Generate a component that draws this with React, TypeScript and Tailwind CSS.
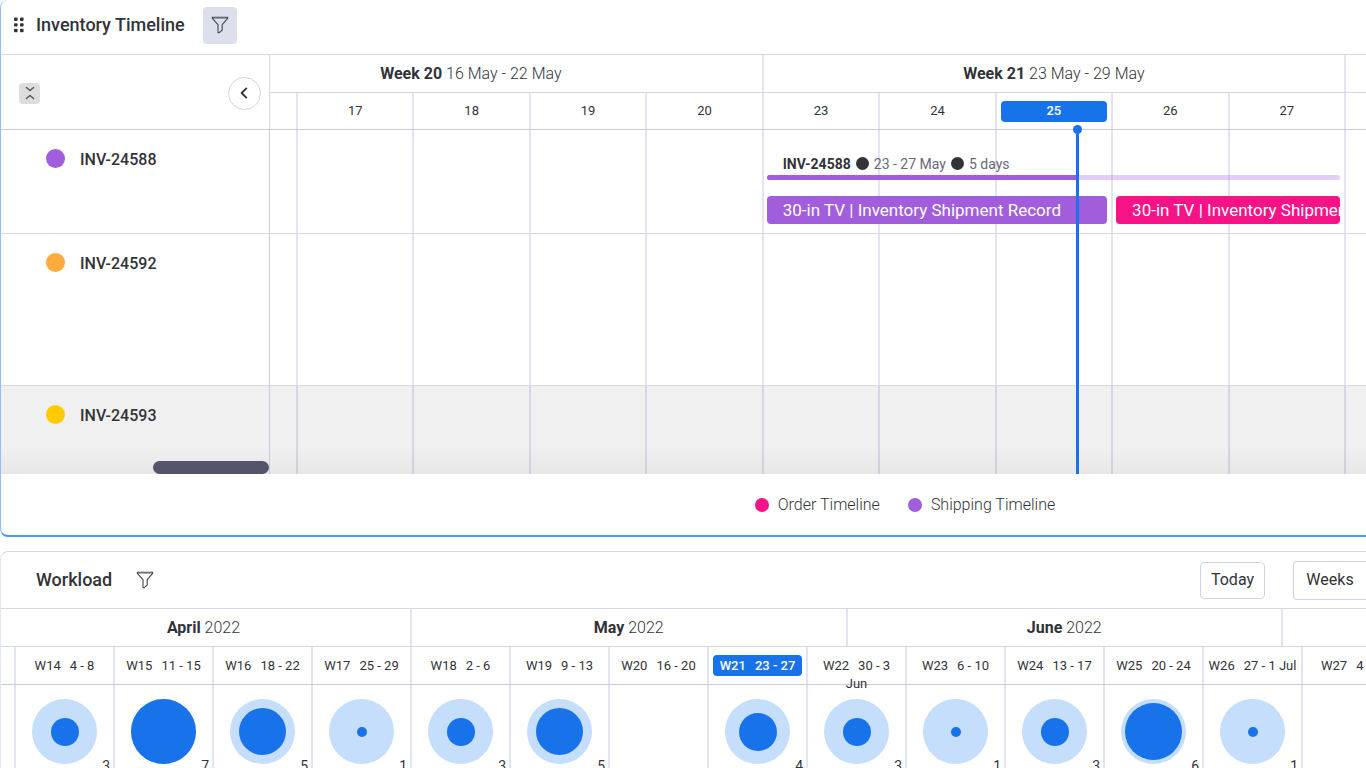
import type { ReactNode } from "react";

type Day = { label: string; today?: boolean };

const days: Day[] = [
  { label: "17" },
  { label: "18" },
  { label: "19" },
  { label: "20" },
  { label: "23" },
  { label: "24" },
  { label: "25", today: true },
  { label: "26" },
  { label: "27" },
];

type Week = { name: string; range: string; wrap?: string; count?: number; current?: boolean };

const weeks: Week[] = [
  { name: "W14", range: "4 - 8", count: 3 },
  { name: "W15", range: "11 - 15", count: 7 },
  { name: "W16", range: "18 - 22", count: 5 },
  { name: "W17", range: "25 - 29", count: 1 },
  { name: "W18", range: "2 - 6", count: 3 },
  { name: "W19", range: "9 - 13", count: 5 },
  { name: "W20", range: "16 - 20" },
  { name: "W21", range: "23 - 27", count: 4, current: true },
  { name: "W22", range: "30 - 3", wrap: "Jun", count: 3 },
  { name: "W23", range: "6 - 10", count: 1 },
  { name: "W24", range: "13 - 17", count: 3 },
  { name: "W25", range: "20 - 24", count: 6 },
  { name: "W26", range: "27 - 1 Jul", count: 1 },
];

const bubbleSize: Record<number, string> = {
  1: "size-[10px]",
  3: "size-[28px]",
  4: "size-[38px]",
  5: "size-[47px]",
  6: "size-[57px]",
  7: "size-[65px]",
};

const dayGrid = "grid grid-cols-[26px_repeat(9,minmax(0,1fr))_22px]";
const weekGrid = "grid grid-cols-[13px_repeat(13,minmax(0,1fr))_65px]";
const vLine = "border-l-2 border-[#3b42a0]/14";

function FilterIcon() {
  return (
    <svg viewBox="0 0 18 18" className="size-[18px]" fill="none" stroke="#45464d" strokeLinejoin="round" aria-hidden="true">
      <path d="M1.3 1.2h15.4v1.1l-5.5 6.3v5.4l-2.9 2.6H7V8.6L1.3 2.3z" strokeWidth="1.1" />
      <path d="M2 2.4h14" strokeWidth="0.5" />
    </svg>
  );
}

function DragHandle() {
  return (
    <svg viewBox="0 0 12 16" className="h-4 w-3" fill="#323338" aria-hidden="true">
      {[0.6, 6.2, 11.8].map((y) => (
        <g key={y}>
          <rect x="1" y={y} width="3.6" height="3.4" rx="1" />
          <rect x="7" y={y} width="3.6" height="3.4" rx="1" />
        </g>
      ))}
    </svg>
  );
}

function DayCells() {
  return (
    <div className={`${dayGrid} h-full`}>
      <div />
      {days.map((d) => (
        <div key={d.label} className={vLine} />
      ))}
      <div className={vLine} />
    </div>
  );
}

function TimelineRow({
  name,
  dot,
  size,
  children,
}: {
  name: string;
  dot: string;
  size: string;
  children?: ReactNode;
}) {
  return (
    <div className={`flex ${size}`}>
      <div className="w-[269px] shrink-0 border-r border-[#c9cce0] pt-[19px] pl-[45px]">
        <div className="flex h-6 items-start gap-[15px]">
          <span className={`size-[19px] rounded-full ${dot}`} />
          <span className="text-base leading-[22px] font-medium text-[#323338]">{name}</span>
        </div>
      </div>
      <div className="relative min-w-0 flex-1">
        <DayCells />
        {children}
      </div>
    </div>
  );
}

function Dot() {
  return <span className="size-[13px] rounded-full bg-[#323338]" />;
}

function InventoryTimeline() {
  return (
    <section className="rounded-l-lg border-b-2 border-l border-b-[#4c97fa] border-l-[#8fbefb] bg-white">
      <header className="flex h-[55px] items-center border-b border-[#d5d8e9] pb-1 pl-3">
        <DragHandle />
        <h2 className="ml-[11px] text-lg font-medium text-[#323338]">Inventory Timeline</h2>
        <button type="button" aria-label="Filter timeline" className="ml-[18px] flex h-[37px] w-[34px] items-center justify-center rounded bg-[#dcdfec]">
          <FilterIcon />
        </button>
      </header>

      <div className="relative">
        <div className="flex border-b border-[#c9cce0]">
          <div className="flex w-[269px] shrink-0 items-center justify-between border-r border-[#d5d8e9] pt-0.5 pr-2 pl-[18px]">
            <button type="button" aria-label="Collapse rows" className="flex size-[21px] items-center justify-center rounded bg-[#dddddd]">
              <svg viewBox="0 0 14 16" className="h-4 w-[14px]" fill="none" stroke="#55565c" strokeWidth="1.4" strokeLinecap="round" strokeLinejoin="round" aria-hidden="true">
                <path d="M3.4 2.4 7 5.6l3.6-3.2M3.4 13.6 7 10.4l3.6 3.2" />
              </svg>
            </button>
            <button type="button" aria-label="Collapse panel" className="flex size-[33px] items-center justify-center rounded-full border border-[#cfd3ea] bg-white">
              <svg viewBox="0 0 16 16" className="size-4" fill="none" stroke="#323338" strokeWidth="1.8" strokeLinecap="round" strokeLinejoin="round" aria-hidden="true">
                <path d="M9.3 3.4 4.6 8l4.7 4.6" />
              </svg>
            </button>
          </div>
          <div className="min-w-0 flex-1">
            <div className={`${dayGrid} h-[38px] border-b border-[#d5d8e9] text-base font-light text-[#323338]`}>
              <div className="col-span-5 flex items-center justify-center pr-[90px]">
                <span>
                  <b className="font-bold">Week 20</b> 16 May - 22 May
                </span>
              </div>
              <div className={`col-span-5 flex items-center justify-center ${vLine}`}>
                <span>
                  <b className="font-bold">Week 21</b> 23 May - 29 May
                </span>
              </div>
              <div className={vLine} />
            </div>
            <div className={`${dayGrid} h-9`}>
              <div />
              {days.map((d) => (
                <div key={d.label} className={`flex items-center justify-center ${vLine} px-1`}>
                  {d.today ? (
                    <span className="flex h-[21px] w-full items-center justify-center rounded bg-[#1873eb] text-[13px] font-medium text-white">
                      {d.label}
                    </span>
                  ) : (
                    <span className="text-[13px] text-[#323338]">{d.label}</span>
                  )}
                </div>
              ))}
              <div className={vLine} />
            </div>
          </div>
        </div>

        <TimelineRow name="INV-24588" dot="bg-[#a25ddc]" size="h-[104px] border-b border-[#d5d8e9]">
          <div className={`${dayGrid} absolute inset-0 content-start gap-y-[5px] pt-[25px]`}>
            <p className="col-span-4 col-start-6 row-start-1 flex h-[15px] items-center gap-[5px] pt-0.5 pl-[21px] text-sm text-[#676879]">
              <b className="font-bold text-[#323338]">INV-24588</b>
              <Dot />
              <span>23 - 27 May</span>
              <Dot />
              <span>5 days</span>
            </p>
            <div className="col-span-5 col-start-6 row-start-2 mr-1 ml-[5px] h-[5px] overflow-hidden rounded-full bg-[#a25ddc]/30">
              <div className="h-full w-[54%] bg-[#a25ddc]" />
            </div>
            <div className="col-span-3 col-start-6 row-start-3 mt-[11px] mr-1 ml-[5px] h-7 overflow-hidden rounded bg-[#a25ddc] px-4 text-[17px] leading-7 whitespace-nowrap text-white">
              30-in TV | Inventory Shipment Record
            </div>
            <div className="col-span-2 col-start-9 row-start-3 mt-[11px] mr-1 ml-[5px] h-7 overflow-hidden rounded bg-[#f81288] pl-4 text-[17px] leading-7 whitespace-nowrap text-white">
              30-in TV | Inventory Shipment Record
            </div>
          </div>
        </TimelineRow>
        <TimelineRow name="INV-24592" dot="bg-[#fdab3d]" size="h-[152px] border-b border-[#d5d8e9]" />
        <TimelineRow
          name="INV-24593"
          dot="bg-[#ffcb00]"
          size="h-[88px] bg-linear-to-b from-[#f0f0f0] from-70% to-[#e7e7e7]"
        />

        <div className="absolute bottom-0 left-[152px] h-[13px] w-[116px] rounded-full bg-[#54546b]" />

        <div className={`${dayGrid} pointer-events-none absolute top-[70px] right-0 bottom-0 left-[269px]`}>
          <div className="col-start-8 flex w-[142%] flex-col items-center">
            <span className="size-[9px] shrink-0 rounded-full bg-[#1873eb]" />
            <span className="w-[3px] flex-1 bg-[#1873eb]" />
          </div>
        </div>
      </div>

      <footer className="flex h-[61px] items-center justify-center gap-7 pl-[443px] text-base font-light text-[#323338]">
        <span className="flex items-center gap-[9px]">
          <span className="size-[14px] rounded-full bg-[#f81288]" />
          Order Timeline
        </span>
        <span className="flex items-center gap-[9px]">
          <span className="size-[14px] rounded-full bg-[#a25ddc]" />
          Shipping Timeline
        </span>
      </footer>
    </section>
  );
}

function MonthLabel({ month, year }: { month: string; year: string }) {
  return (
    <span>
      <b className="font-bold">{month}</b> {year}
    </span>
  );
}

function Workload() {
  return (
    <section className="mt-[14px] rounded-tl-lg border-t border-l border-t-[#d5d8e9] border-l-[#e4e5f2] bg-white">
      <header className="flex h-[57px] items-center border-b border-[#d5d8e9] pl-[35px]">
        <h2 className="text-lg font-medium text-[#323338]">Workload</h2>
        <button type="button" aria-label="Filter workload" className="ml-6">
          <FilterIcon />
        </button>
        <button type="button" className="ml-auto h-[37px] w-[65px] rounded border border-[#d0d4e8] text-base text-[#323338]">
          Today
        </button>
        <button type="button" className="ml-7 h-[39px] w-[73px] rounded-l border border-r-0 border-[#d0d4e8] text-base text-[#323338]">
          Weeks
        </button>
      </header>

      <div className="grid h-[38px] grid-cols-[409px_minmax(0,1fr)_minmax(0,1fr)_85px] border-b border-[#d5d8e9] text-base font-light text-[#323338]">
        <div className="flex items-center justify-center pr-1">
          <MonthLabel month="April" year="2022" />
        </div>
        <div className={`flex items-center justify-center ${vLine}`}>
          <MonthLabel month="May" year="2022" />
        </div>
        <div className={`flex items-center justify-center ${vLine}`}>
          <MonthLabel month="June" year="2022" />
        </div>
        <div className={vLine} />
      </div>

      <div className={`${weekGrid} grid-rows-[37px] border-b border-[#c9cce0] text-center text-[13px] leading-[19px] whitespace-nowrap text-[#323338]`}>
        <div />
        {weeks.map((w) => (
          <div key={w.name} className={`${vLine} px-1 pt-2`}>
            <div className={w.current ? "rounded bg-[#1873eb] py-px font-medium text-white" : "py-px"}>
              <span className="mr-[9px]">{w.name}</span>
              <span>{w.range}</span>
            </div>
            {w.wrap && <div className="leading-4">{w.wrap}</div>}
          </div>
        ))}
        <div className={`overflow-hidden ${vLine} pt-[9px] pl-[18px] text-left`}>
          <span className="mr-[9px]">W27</span>
          <span>4 - 8</span>
        </div>
      </div>

      <div className={`${weekGrid} h-[100px]`}>
        <div />
        {weeks.map((w) => (
          <div key={w.name} className={`relative ${vLine} pt-[14px]`}>
            {w.count && (
              <>
                <div className="mx-auto flex size-[65px] items-center justify-center rounded-full bg-[#c5defb]">
                  <span className={`rounded-full bg-[#1873eb] ${bubbleSize[w.count]}`} />
                </div>
                <span className="absolute right-[3px] bottom-[9px] text-sm leading-5 text-[#323338]">{w.count}</span>
              </>
            )}
          </div>
        ))}
        <div className={vLine} />
      </div>
    </section>
  );
}

export default function App() {
  return (
    <main className="h-screen overflow-hidden bg-white font-['Roboto',sans-serif]">
      <InventoryTimeline />
      <Workload />
    </main>
  );
}
